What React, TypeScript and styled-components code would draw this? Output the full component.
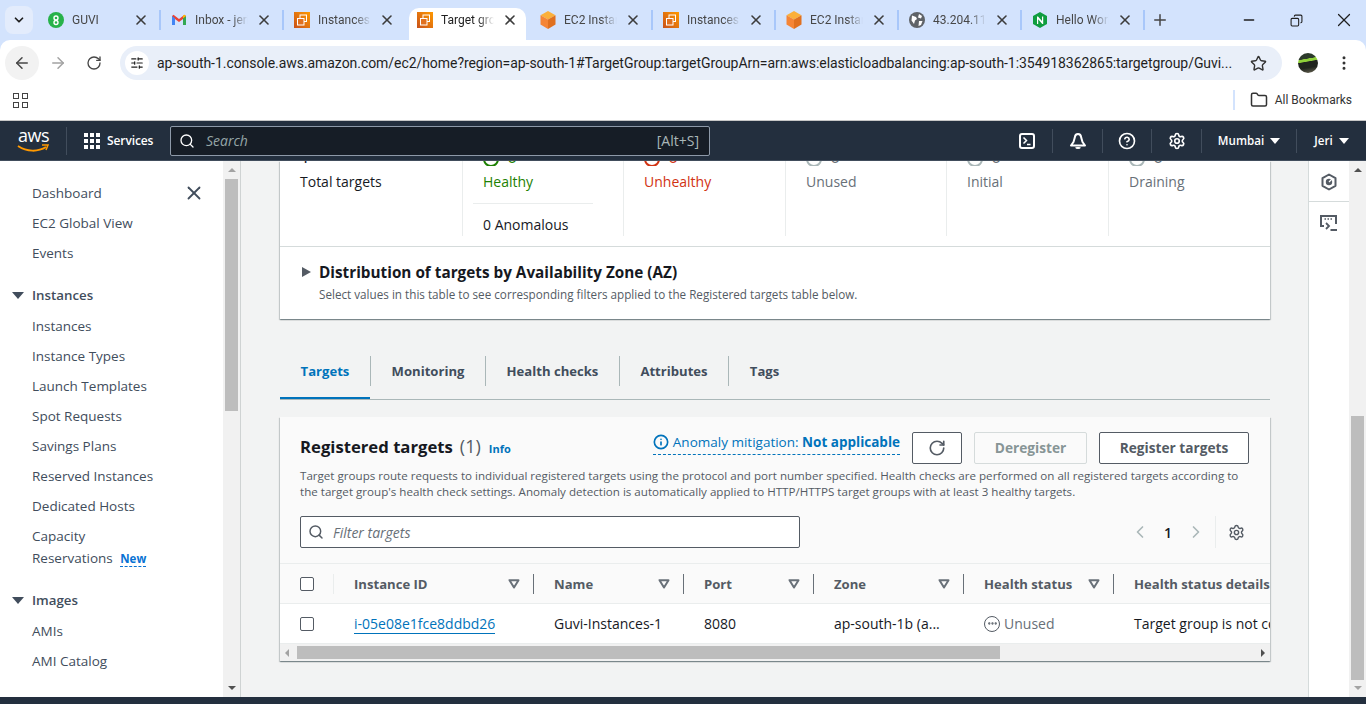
import React from "react";
import styled, { createGlobalStyle } from "styled-components";
import {
  ArrowLeft,
  ArrowRight,
  ChevronDown,
  ChevronLeft,
  ChevronRight,
  CircleHelp,
  Copy,
  Ellipsis,
  EllipsisVertical,
  Folder,
  Info,
  Minus,
  Plus,
  RotateCw,
  Search,
  Settings,
  SlidersHorizontal,
  Star,
  X,
} from "lucide-react";

const UI = `"Roboto", "Noto Sans", sans-serif`;
const EMBER = `"Open Sans", "Noto Sans", sans-serif`;

const GlobalStyle = createGlobalStyle`
  html, body { margin: 0; padding: 0; overflow: hidden; background: #fff; }
  body { font-family: ${EMBER}; color: #16191f; }
  * { box-sizing: border-box; }
`;

const Page = styled.div`
  width: 1366px;
  height: 704px;
  display: flex;
  flex-direction: column;
  overflow: hidden;
  background: #d3e3fd;
`;

/* browser chrome */
const TabStrip = styled.div`
  height: 40px;
  flex: none;
  background: #d3e3fd;
  display: flex;
  align-items: flex-end;
  padding-left: 5px;
  font-family: ${UI};
`;
const TabMenu = styled.div`
  width: 28px;
  height: 28px;
  margin: 0 4px 6px 0;
  border-radius: 8px;
  background: #e3ecfc;
  display: flex;
  align-items: center;
  justify-content: center;
  color: #1f1f1f;
`;
const Tab = styled.div<{ $active?: boolean; $sep?: boolean }>`
  width: 123px;
  height: 32px;
  flex: none;
  display: flex;
  align-items: center;
  position: relative;
  padding: 0 0 8px 11px;
  gap: 8px;
  color: ${(p) => (p.$active ? "#1f1f1f" : "#474747")};
  &::before {
    content: "";
    display: ${(p) => (p.$active ? "block" : "none")};
    position: absolute;
    left: 3px;
    right: 3px;
    top: 0;
    bottom: 0;
    background: #fff;
    border-radius: 10px 10px 0 0;
  }
  &::after {
    content: "";
    display: ${(p) => (p.$sep ? "block" : "none")};
    position: absolute;
    right: -1px;
    top: 2px;
    width: 2px;
    height: 20px;
    background: #a8c7fa;
  }
  > * {
    position: relative;
  }
`;
const TabIcon = styled.span`
  width: 16px;
  height: 16px;
  flex: none;
  display: flex;
  align-items: center;
  justify-content: center;
`;
const TabTitle = styled.span`
  width: 53px;
  flex: none;
  font-size: 12px;
  white-space: nowrap;
  overflow: hidden;
  -webkit-mask-image: linear-gradient(90deg, #000 70%, transparent);
  mask-image: linear-gradient(90deg, #000 70%, transparent);
`;
const TabClose = styled.span`
  display: flex;
  margin-left: 0;
  color: #3c3c3c;
`;
const NewTab = styled.div`
  margin: 0 0 11px 7px;
  display: flex;
  color: #444;
`;
const WindowButtons = styled.div`
  margin: 0 0 9px auto;
  display: flex;
  align-items: center;
  gap: 30px;
  padding-right: 11px;
  color: #1f1f1f;
`;
const RestoreIcon = styled.span`
  display: flex;
  margin-left: 3px;
  transform: scaleX(-1);
`;

const Toolbar = styled.div`
  height: 40px;
  flex: none;
  background: #fff;
  border-radius: 10px 10px 0 0;
  display: flex;
  align-items: center;
  padding: 6px 0 0 0;
  font-family: ${UI};
`;
const NavButton = styled.span<{ $faded?: boolean; $hover?: boolean }>`
  width: 34px;
  height: 34px;
  margin-left: ${(p) => (p.$hover ? 5 : 2)}px;
  border-radius: 50%;
  display: flex;
  align-items: center;
  justify-content: center;
  background: ${(p) => (p.$hover ? "#f2f2f2" : "transparent")};
  color: ${(p) => (p.$faded ? "#a3a3a3" : "#474747")};
`;
const Omnibox = styled.div`
  width: 1162px;
  height: 34px;
  margin-left: 9px;
  border-radius: 17px;
  background: #e9eff9;
  display: flex;
  align-items: center;
  padding: 0 15px 0 5px;
  flex: none;
`;
const SiteInfo = styled.span`
  width: 24px;
  height: 24px;
  border-radius: 50%;
  background: #fff;
  display: flex;
  align-items: center;
  justify-content: center;
  color: #1f1f1f;
  flex: none;
`;
const Url = styled.span`
  margin-left: 8px;
  flex: 1;
  font-size: 14px;
  letter-spacing: -0.056px;
  color: #1f1f1f;
  white-space: nowrap;
  overflow: hidden;
`;
const Avatar = styled.span`
  width: 20px;
  height: 20px;
  border-radius: 50%;
  margin-left: 16px;
  flex: none;
  background: linear-gradient(170deg, #2c3a2a 0 30%, #8fcf3a 32% 42%, #20241e 45% 70%, #6e6a58 100%);
`;
const MoreButton = styled.span`
  margin-left: 17px;
  display: flex;
  color: #333;
`;

const BookmarksBar = styled.div`
  height: 41px;
  flex: none;
  background: #fff;
  border-bottom: 1px solid #c7c7c7;
  display: flex;
  align-items: center;
  padding: 0 14px 0 13px;
  font-family: ${UI};
`;
const AppsGrid = styled.div`
  display: grid;
  grid-template-columns: 6px 6px;
  gap: 3px;
  span {
    width: 6px;
    height: 6px;
    border: 1.2px solid #444;
  }
`;
const BookmarksRight = styled.div`
  margin-left: auto;
  display: flex;
  align-items: center;
  font-size: 12px;
  color: #333;
  gap: 7px;
  &::before {
    content: "";
    width: 2px;
    height: 20px;
    background: #d3e3fd;
    margin-right: 8px;
  }
`;

/* aws top nav */
const TopNav = styled.header`
  height: 40px;
  flex: none;
  background: #232f3e;
  display: flex;
  align-items: center;
  color: #fff;
  border-bottom: 1px solid #414d5c;
`;
const AwsLogo = styled.div`
  width: 67px;
  flex: none;
  height: 28px;
  padding-left: 18px;
  position: relative;
  font-size: 18px;
  line-height: 17px;
  letter-spacing: -0.5px;
  border-right: 1px solid #414d5c;
  svg {
    position: absolute;
    left: 17px;
    top: 17px;
  }
`;
const ServicesButton = styled.div`
  display: flex;
  align-items: center;
  gap: 7px;
  margin-left: 17px;
  font-size: 12px;
  font-weight: 600;
  letter-spacing: -0.1px;
  width: 86px;
  flex: none;
`;
const Dots = styled.div`
  display: grid;
  grid-template-columns: repeat(3, 4px);
  gap: 2px;
  span {
    width: 4px;
    height: 4px;
    background: #fff;
  }
`;
const NavSearch = styled.div`
  width: 540px;
  height: 30px;
  flex: none;
  background: #161d26;
  border: 1px solid #8d99a8;
  border-radius: 2px;
  display: flex;
  align-items: center;
  padding: 0 10px 0 8px;
  gap: 11px;
  color: #d5dbdb;
  font-size: 14px;
`;
const SearchHint = styled.span`
  font-style: italic;
  color: #95a5a6;
`;
const Shortcut = styled.span`
  margin-left: auto;
  color: #aab7b8;
`;
const NavActions = styled.div`
  margin-left: auto;
  display: flex;
  align-items: center;
  height: 100%;
`;
const NavAction = styled.div<{ $w: number }>`
  width: ${(p) => p.$w}px;
  height: 24px;
  display: flex;
  align-items: center;
  justify-content: center;
  gap: 6px;
  border-left: 1px solid #414d5c;
  font-size: 11.6px;
  font-weight: 600;
  &:first-child {
    border-left: 0;
  }
`;
const Caret = styled.span<{ $c?: string; $size?: number }>`
  display: inline-block;
  width: 0;
  height: 0;
  border-left: ${(p) => p.$size ?? 5}px solid transparent;
  border-right: ${(p) => p.$size ?? 5}px solid transparent;
  border-top: ${(p) => (p.$size ?? 5) + 1}px solid ${(p) => p.$c ?? "#fff"};
`;

/* console body */
const Body = styled.div`
  flex: 1;
  min-height: 0;
  display: flex;
  background: #f2f3f3;
`;
const SideNav = styled.nav`
  width: 223px;
  flex: none;
  background: #fff;
  padding: 22px 0 0 0;
  position: relative;
  color: #414d5c;
  font-size: 13.5px;
`;
const NavClose = styled.span`
  position: absolute;
  left: 183px;
  top: 21px;
  display: flex;
  color: #414d5c;
`;
const NavLink = styled.div<{ $gap?: number }>`
  height: 30px;
  line-height: 20px;
  padding: 0 0 0 32px;
  margin-bottom: ${(p) => p.$gap ?? 0}px;
  white-space: nowrap;
`;
const NavLinkTall = styled.div`
  padding: 0 0 0 32px;
  line-height: 22px;
  margin: -1px 0 20px 0;
`;
const NewBadge = styled.span`
  font-size: 11.5px;
  font-weight: 700;
  color: #0972d3;
  margin-left: 4px;
  border-bottom: 1px dashed #0972d3;
`;
const NavSection = styled.div`
  height: 30px;
  line-height: 20px;
  font-size: 13.3px;
  font-weight: 600;
  display: flex;
  align-items: center;
  gap: 8px;
  padding: 0 0 10px 12px;
  margin-bottom: 1px;
`;
const Track = styled.div`
  width: 18px;
  flex: none;
  background: #f1f1f1;
  display: flex;
  flex-direction: column;
  align-items: center;
  position: relative;
  border-right: 1px solid #cfd3d3;
`;
const Thumb = styled.div<{ $top: number; $h: number }>`
  position: absolute;
  left: 2px;
  top: ${(p) => p.$top}px;
  width: 13px;
  height: ${(p) => p.$h}px;
  background: #bdbdbd;
`;
const ArrowUp = styled.span<{ $c: string }>`
  margin-top: 7px;
  width: 0;
  height: 0;
  border-left: 4px solid transparent;
  border-right: 4px solid transparent;
  border-bottom: 4px solid ${(p) => p.$c};
`;
const ArrowDown = styled.span<{ $c: string }>`
  margin-top: auto;
  margin-bottom: 7px;
  width: 0;
  height: 0;
  border-left: 4px solid transparent;
  border-right: 4px solid transparent;
  border-top: 4px solid ${(p) => p.$c};
`;

const Main = styled.main`
  flex: 1;
  min-width: 0;
  overflow: hidden;
  padding: 0 38px 0 39px;
`;
const Card = styled.section`
  background: #fff;
  box-shadow: 0 1px 1px 0 rgba(0, 28, 36, 0.3), 1px 1px 1px 0 rgba(0, 28, 36, 0.15),
    -1px 1px 1px 0 rgba(0, 28, 36, 0.15);
`;
const Stats = styled.div`
  height: 86px;
  display: grid;
  grid-template-columns: 182px 161px 162px 161px 162px 1fr;
  border-bottom: 1px solid #d5dbdb;
  padding-bottom: 10px;
`;
const Stat = styled.div<{ $first?: boolean }>`
  border-left: ${(p) => (p.$first ? "0" : "1px solid #eaeded")};
  padding-left: 20px;
`;
const StatClip = styled.div`
  height: 5px;
  overflow: hidden;
  position: relative;
  margin-bottom: 6px;
`;
const StatRing = styled.span<{ $c: string }>`
  position: absolute;
  left: 0;
  top: -10px;
  width: 16px;
  height: 16px;
  border: 2px solid ${(p) => p.$c};
  border-radius: 50%;
`;
const StatDigit = styled.span<{ $c: string; $x: number }>`
  position: absolute;
  left: ${(p) => p.$x}px;
  top: -16px;
  font-size: 18px;
  line-height: 22px;
  color: ${(p) => p.$c};
`;
const StatLabel = styled.div<{ $c: string }>`
  font-size: 14px;
  line-height: 20px;
  color: ${(p) => p.$c};
`;
const StatRule = styled.div`
  height: 1px;
  width: 120px;
  margin: 11px 0 11px -10px;
  background: #eaeded;
`;
const Distribution = styled.div`
  height: 72px;
  display: flex;
  gap: 8px;
  padding: 15px 0 0 22px;
`;
const DistCaret = styled.span`
  margin-top: 5px;
  width: 0;
  height: 0;
  border-top: 5px solid transparent;
  border-bottom: 5px solid transparent;
  border-left: 9px solid #545b64;
`;
const DistTitle = styled.div`
  font-size: 15.3px;
  font-weight: 700;
  line-height: 20px;
`;
const DistDesc = styled.div`
  font-size: 11.7px;
  line-height: 16px;
  color: #545b64;
  margin-top: 4px;
`;

const TabsRow = styled.div`
  margin-top: 36px;
  height: 45px;
  display: flex;
  align-items: flex-start;
  border-bottom: 1px solid #aab7b8;
`;
const ConsoleTab = styled.div<{ $active?: boolean; $w: number }>`
  width: ${(p) => p.$w}px;
  height: 30px;
  margin-top: 1px;
  display: flex;
  align-items: center;
  justify-content: center;
  font-size: 13.1px;
  font-weight: 700;
  line-height: 20px;
  color: ${(p) => (p.$active ? "#0073bb" : "#414d5c")};
  position: relative;
  border-left: ${(p) => (p.$active ? "0" : "1px solid #aab7b8")};
  &::after {
    content: "";
    display: ${(p) => (p.$active ? "block" : "none")};
    position: absolute;
    left: 0;
    right: 0;
    bottom: -13px;
    height: 2px;
    background: #0073bb;
  }
`;

const TargetsCard = styled(Card)`
  margin-top: 17px;
  background: #fafafa;
`;
const CardHead = styled.div`
  padding: 15px 21px 0 20px;
`;
const HeadRow = styled.div`
  display: flex;
  align-items: flex-start;
  height: 32px;
`;
const CardTitle = styled.h2`
  margin: 3px 0 0 0;
  font-size: 16.7px;
  font-weight: 700;
  line-height: 22px;
  span {
    font-size: 18px;
    font-weight: 400;
    color: #545b64;
    margin-left: 7px;
  }
`;
const InfoLink = styled.a`
  margin: 10px 0 0 8px;
  font-size: 11px;
  font-weight: 700;
  line-height: 14px;
  color: #0073bb;
`;
const Anomaly = styled.div`
  margin-left: auto;
  display: flex;
  align-items: center;
  gap: 4px;
  height: 23px;
  padding-bottom: 2px;
  font-size: 13.5px;
  color: #0073bb;
  border-bottom: 1px dashed #0073bb;
  b {
    font-weight: 700;
  }
`;
const Button = styled.div<{ $w: number; $disabled?: boolean }>`
  width: ${(p) => p.$w}px;
  height: 32px;
  margin-left: 12px;
  padding-bottom: 1px;
  border: 1px solid ${(p) => (p.$disabled ? "#d5dbdb" : "#545b64")};
  border-radius: 2px;
  display: flex;
  align-items: center;
  justify-content: center;
  font-size: 13.7px;
  font-weight: 700;
  color: ${(p) => (p.$disabled ? "#879596" : "#545b64")};
  background: ${(p) => (p.$disabled ? "#fafafa" : "#fff")};
`;
const CardDesc = styled.p`
  margin: 4px 0 0 0;
  font-size: 11.6px;
  line-height: 16px;
  color: #545b64;
`;
const FilterRow = styled.div`
  margin-top: 16px;
  height: 32px;
  display: flex;
  align-items: center;
`;
const FilterInput = styled.div`
  width: 500px;
  height: 32px;
  background: #fff;
  border: 1px solid #545b64;
  border-radius: 2px;
  display: flex;
  align-items: center;
  padding: 0 0 0 7px;
  gap: 9px;
  font-size: 14px;
  font-style: italic;
  color: #687078;
`;
const Pager = styled.div`
  margin-left: auto;
  display: flex;
  align-items: center;
  color: #aab7b8;
  margin-right: 4px;
`;
const PageNum = styled.span`
  margin: 0 14px;
  font-size: 14px;
  font-weight: 600;
  color: #16191f;
`;
const PagerGear = styled.span`
  display: flex;
  margin-left: 9px;
  padding-left: 12px;
  height: 32px;
  align-items: center;
  border-left: 1px solid #eaeded;
  color: #545b64;
`;

const TableWrap = styled.div`
  margin-top: 15px;
  overflow: hidden;
`;
const Table = styled.table`
  width: 1050px;
  table-layout: fixed;
  border-collapse: collapse;
  font-size: 14px;
`;
const Th = styled.th<{ $w: number }>`
  width: ${(p) => p.$w}px;
  height: 40px;
  background: #fafafa;
  border-top: 1px solid #eaeded;
  border-bottom: 1px solid #eaeded;
  padding: 0;
  text-align: left;
  font-size: 13.1px;
  font-weight: 700;
  color: #545b64;
  white-space: nowrap;
`;
const ThInner = styled.div<{ $faint?: boolean }>`
  display: flex;
  align-items: center;
  height: 20px;
  padding: 0 13px 0 20px;
  border-right: 1px solid ${(p) => (p.$faint ? "#eaeded" : "#687078")};
  justify-content: space-between;
`;
const ThLast = styled.div`
  padding-left: 20px;
`;
const SortCaret = styled.span`
  display: block;
  width: 12px;
  height: 10px;
  svg {
    display: block;
  }
`;
const Td = styled.td`
  height: 40px;
  padding: 0 0 0 20px;
  background: #fff;
  border-bottom: 1px solid #eaeded;
  white-space: nowrap;
  overflow: hidden;
`;
const Box = styled.span`
  display: block;
  width: 14px;
  height: 14px;
  border: 1px solid #545b64;
  border-radius: 2px;
  background: #fff;
`;
const IdLink = styled.a`
  color: #0073bb;
  border-bottom: 1px solid #0073bb;
`;
const StatusCell = styled.span`
  display: flex;
  align-items: center;
  gap: 4px;
  color: #687078;
`;
const StatusDot = styled.span`
  width: 16px;
  height: 16px;
  border: 1.6px solid #545b64;
  border-radius: 50%;
  display: flex;
  align-items: center;
  justify-content: center;
  color: #545b64;
`;
const HScroll = styled.div`
  height: 17px;
  background: #f1f1f1;
  display: flex;
  align-items: center;
  position: relative;
  padding: 0 5px;
  justify-content: space-between;
`;
const HThumb = styled.div`
  position: absolute;
  left: 17px;
  top: 2px;
  width: 703px;
  height: 13px;
  background: #bdbdbd;
`;
const ArrowL = styled.span`
  width: 0;
  height: 0;
  border-top: 4px solid transparent;
  border-bottom: 4px solid transparent;
  border-right: 4px solid #a3a3a3;
`;
const ArrowR = styled.span`
  width: 0;
  height: 0;
  border-top: 4px solid transparent;
  border-bottom: 4px solid transparent;
  border-left: 4px solid #505050;
`;

const Rail = styled.aside`
  width: 41px;
  flex: none;
  background: #fff;
  border-left: 1px solid #d5dbdb;
  color: #545b64;
`;
const RailItem = styled.div<{ $line?: boolean }>`
  height: 41px;
  display: flex;
  align-items: center;
  justify-content: center;
  padding-top: ${(p) => (p.$line ? 2 : 0)}px;
  border-bottom: ${(p) => (p.$line ? "1px solid #d5dbdb" : "0")};
`;
const PageScroll = styled(Track)`
  width: 17px;
  border-right: 0;
`;
const BottomBar = styled.div`
  height: 7px;
  flex: none;
  background: #232f3e;
`;

const AwsTabIcon = () => (
  <svg width="16" height="16" viewBox="0 0 16 16">
    <defs>
      <linearGradient id="ec2g" x1="0" y1="1" x2="1" y2="0">
        <stop offset="0" stopColor="#c8511b" />
        <stop offset="1" stopColor="#f90" />
      </linearGradient>
    </defs>
    <rect width="16" height="16" fill="url(#ec2g)" />
    <rect x="6" y="3" width="6.5" height="6.5" fill="none" stroke="#fff" strokeWidth="1" />
    <rect x="3.5" y="6.5" width="6.5" height="6.5" fill="#e0701f" stroke="#fff" strokeWidth="1" />
  </svg>
);
const CubeIcon = () => (
  <svg width="16" height="18" viewBox="0 0 16 18">
    <path d="M8 0 15.500 4.200 8 8.400.5 4.200Z" fill="#fbb03b" />
    <path d="M.5 4.200 8 8.400V18L.5 13.600Z" fill="#f58536" />
    <path d="M15.500 4.200 8 8.400V18l7.500-4.400Z" fill="#e0701f" />
  </svg>
);
const GuviIcon = () => (
  <svg width="16" height="16" viewBox="0 0 16 16">
    <circle cx="8" cy="8" r="8" fill="#27b24a" />
    <circle cx="8" cy="6" r="2" fill="none" stroke="#fff" strokeWidth="1.4" />
    <circle cx="8" cy="10.500" r="2" fill="none" stroke="#fff" strokeWidth="1.4" />
  </svg>
);
const GmailIcon = () => (
  <svg width="16" height="16" viewBox="0 0 16 16">
    <path d="M1 4v9h3V7l4 3 4-3v6h3V4l-1.500-1.200L8 7 2.500 2.800Z" fill="#ea4335" />
    <path d="M1 4v9h3V6.300Z" fill="#4285f4" />
    <path d="M15 4v9h-3V6.300Z" fill="#34a853" />
    <path d="M15 4l-3 2.300V3.500l1.500-.7Z" fill="#fbbc04" />
  </svg>
);
const GlobeIcon = () => (
  <svg width="16" height="16" viewBox="0 0 16 16">
    <circle cx="8" cy="8" r="8" fill="#5f6368" />
    <path d="M3 3.500 7 5l1 2-2 1.500L5 12 2.500 8.500ZM10 2l3 2-1 2.500-3-1ZM10 9l3.500 0-1.500 4-2.500 1Z" fill="#fff" />
  </svg>
);
const NginxIcon = () => (
  <svg width="16" height="16" viewBox="0 0 16 16">
    <path d="M8 0 15 4v8l-7 4-7-4V4Z" fill="#0f9d3f" />
    <path d="M5 12V4.500h1L10 9V4.500h1.200V12h-1L6.200 7.300V12Z" fill="#fff" />
  </svg>
);
const SortIcon = () => (
  <SortCaret>
    <svg width="12" height="10" viewBox="0 0 12 10">
      <path d="M1.500 1.200h9L6 8.500Z" fill="none" stroke="#687078" strokeWidth="2" strokeLinejoin="round" />
    </svg>
  </SortCaret>
);
const BellIcon = () => (
  <svg width="18" height="18" viewBox="0 0 18 18">
    <path d="M9 2c-2 0-3 1.500-3.200 3.500L4.500 10 2 13.500h14L13.500 10l-1.300-4.500C12 3.500 11 2 9 2Z" fill="none" stroke="#fff" strokeWidth="2" strokeLinejoin="round" />
    <path d="M7 15.200c.4 1.200 3.600 1.200 4 0" fill="none" stroke="#fff" strokeWidth="2" />
  </svg>
);
const TerminalIcon = () => (
  <svg width="16" height="16" viewBox="0 0 16 16">
    <rect x="1" y="1" width="14" height="14" rx="2" fill="none" stroke="#fff" strokeWidth="2" />
    <path d="M4.500 4.500 7.500 7.500 4.500 10.500M8 11.500h3.500" fill="none" stroke="#fff" strokeWidth="1.500" />
  </svg>
);
const HexIcon = () => (
  <svg width="18" height="18" viewBox="0 0 18 18">
    <path d="M9 1.500 15.500 5.200V12.800L9 16.500 2.500 12.800V5.200Z" fill="none" stroke="#545b64" strokeWidth="2" strokeLinejoin="round" />
    <path d="M5.800 9a3.200 3.200 0 1 1 6.400 0 3.200 3.200 0 0 1-6.400 0Z" fill="#545b64" />
    <path d="M9 9l3-3" stroke="#fff" strokeWidth="1.200" />
  </svg>
);
const ShellIcon = () => (
  <svg width="20" height="20" viewBox="0 0 20 20">
    <path d="M5 13H2V3h15v8" fill="none" stroke="#545b64" strokeWidth="2" />
    <path d="M5.500 6h1.500M8.500 6h1.500M11.500 6h1.500" stroke="#545b64" strokeWidth="1.500" />
    <path d="M7 10l3 3-3 3M11.500 17H18" fill="none" stroke="#545b64" strokeWidth="1.800" />
  </svg>
);

const tabs = [
  { title: "GUVI", icon: <GuviIcon />, sep: true },
  { title: "Inbox - jeri", icon: <GmailIcon />, sep: true },
  { title: "Instances", icon: <AwsTabIcon />, sep: false },
  { title: "Target groups", icon: <AwsTabIcon />, active: true },
  { title: "EC2 Instances", icon: <CubeIcon />, sep: true },
  { title: "Instances", icon: <AwsTabIcon />, sep: true },
  { title: "EC2 Instances", icon: <CubeIcon />, sep: true },
  { title: "43.204.110", icon: <GlobeIcon />, sep: true },
  { title: "Hello World", icon: <NginxIcon />, sep: true },
];
const ec2Links = [
  "Instances",
  "Instance Types",
  "Launch Templates",
  "Spot Requests",
  "Savings Plans",
  "Reserved Instances",
  "Dedicated Hosts",
];
const stats = [
  { label: "Healthy", ring: "#1d8102", color: "#1d8102" },
  { label: "Unhealthy", ring: "#d13212", color: "#d13212" },
  { label: "Unused", ring: "#aab7b8", color: "#687078" },
  { label: "Initial", ring: "#aab7b8", color: "#687078" },
  { label: "Draining", ring: "#aab7b8", color: "#687078" },
];
const consoleTabs = [
  { label: "Monitoring", w: 115 },
  { label: "Health checks", w: 134 },
  { label: "Attributes", w: 109 },
  { label: "Tags", w: 72 },
];
const columns = [
  { label: "Instance ID", w: 200 },
  { label: "Name", w: 150 },
  { label: "Port", w: 130 },
  { label: "Zone", w: 150 },
  { label: "Health status", w: 150 },
];

export default function App() {
  return (
    <Page>
      <GlobalStyle />
      <TabStrip>
        <TabMenu>
          <ChevronDown size={14} strokeWidth={3} />
        </TabMenu>
        {tabs.map((t, i) => (
          <Tab key={i} $active={t.active} $sep={t.sep}>
            <TabIcon>{t.icon}</TabIcon>
            <TabTitle>{t.title}</TabTitle>
            <TabClose>
              <X size={16} strokeWidth={2.4} />
            </TabClose>
          </Tab>
        ))}
        <NewTab>
          <Plus size={18} />
        </NewTab>
        <WindowButtons>
          <Minus size={16} />
          <RestoreIcon>
            <Copy size={13} />
          </RestoreIcon>
          <X size={22} strokeWidth={1.3} />
        </WindowButtons>
      </TabStrip>

      <Toolbar>
        <NavButton $hover>
          <ArrowLeft size={18} />
        </NavButton>
        <NavButton $faded>
          <ArrowRight size={18} />
        </NavButton>
        <NavButton>
          <RotateCw size={16} />
        </NavButton>
        <Omnibox>
          <SiteInfo>
            <SlidersHorizontal size={14} />
          </SiteInfo>
          <Url>
            ap-south-1.console.aws.amazon.com/ec2/home?region=ap-south-1#TargetGroup:targetGroupArn=arn:aws:elasticloadbalancing:ap-south-1:354918362865:targetgroup/Guvi...
          </Url>
          <Star size={17} color="#333" />
        </Omnibox>
        <Avatar />
        <MoreButton>
          <EllipsisVertical size={18} />
        </MoreButton>
      </Toolbar>

      <BookmarksBar>
        <AppsGrid>
          <span />
          <span />
          <span />
          <span />
        </AppsGrid>
        <BookmarksRight>
          <Folder size={18} />
          All Bookmarks
        </BookmarksRight>
      </BookmarksBar>

      <TopNav>
        <AwsLogo>
          aws
          <svg width="34" height="10" viewBox="0 0 34 10">
            <path d="M1 2c9 6 20 6 28 1" fill="none" stroke="#f90" strokeWidth="2" />
            <path d="M25 1l6 0-2 5" fill="none" stroke="#f90" strokeWidth="1.500" />
          </svg>
        </AwsLogo>
        <ServicesButton>
          <Dots>
            {Array.from({ length: 9 }).map((_, i) => (
              <span key={i} />
            ))}
          </Dots>
          Services
        </ServicesButton>
        <NavSearch>
          <Search size={16} color="#fff" />
          <SearchHint>Search</SearchHint>
          <Shortcut>[Alt+S]</Shortcut>
        </NavSearch>
        <NavActions>
          <NavAction $w={50}>
            <TerminalIcon />
          </NavAction>
          <NavAction $w={50}>
            <BellIcon />
          </NavAction>
          <NavAction $w={49}>
            <CircleHelp size={18} strokeWidth={2.2} />
          </NavAction>
          <NavAction $w={50}>
            <Settings size={18} strokeWidth={2.2} />
          </NavAction>
          <NavAction $w={95}>
            Mumbai <Caret />
          </NavAction>
          <NavAction $w={70}>
            Jeri <Caret />
          </NavAction>
        </NavActions>
      </TopNav>

      <Body>
        <SideNav>
          <NavClose>
            <X size={22} strokeWidth={2} />
          </NavClose>
          <NavLink>Dashboard</NavLink>
          <NavLink>EC2 Global View</NavLink>
          <NavLink $gap={12}>Events</NavLink>
          <NavSection>
            <Caret $c="#414d5c" $size={6} />
            Instances
          </NavSection>
          {ec2Links.map((l) => (
            <NavLink key={l}>{l}</NavLink>
          ))}
          <NavLinkTall>
            Capacity
            <br />
            Reservations <NewBadge>New</NewBadge>
          </NavLinkTall>
          <NavSection>
            <Caret $c="#414d5c" $size={6} />
            Images
          </NavSection>
          <NavLink>AMIs</NavLink>
          <NavLink>AMI Catalog</NavLink>
        </SideNav>
        <Track>
          <ArrowUp $c="#a3a3a3" />
          <Thumb $top={18} $h={232} />
          <ArrowDown $c="#505050" />
        </Track>

        <Main>
          <Card>
            <Stats>
              <Stat $first>
                <StatClip>
                  <StatDigit $c="#16191f" $x={0}>
                    1
                  </StatDigit>
                </StatClip>
                <StatLabel $c="#16191f">Total targets</StatLabel>
              </Stat>
              {stats.map((s, i) => (
                <Stat key={s.label}>
                  <StatClip>
                    <StatRing $c={s.ring} />
                    <StatDigit $c={s.color} $x={24}>
                      0
                    </StatDigit>
                  </StatClip>
                  <StatLabel $c={s.color}>{s.label}</StatLabel>
                  {i === 0 && (
                    <>
                      <StatRule />
                      <StatLabel $c="#16191f">0 Anomalous</StatLabel>
                    </>
                  )}
                </Stat>
              ))}
            </Stats>
            <Distribution>
              <DistCaret />
              <div>
                <DistTitle>Distribution of targets by Availability Zone (AZ)</DistTitle>
                <DistDesc>
                  Select values in this table to see corresponding filters applied to the Registered targets table below.
                </DistDesc>
              </div>
            </Distribution>
          </Card>

          <TabsRow>
            <ConsoleTab $active $w={90}>
              Targets
            </ConsoleTab>
            {consoleTabs.map((t) => (
              <ConsoleTab key={t.label} $w={t.w}>
                {t.label}
              </ConsoleTab>
            ))}
          </TabsRow>

          <TargetsCard>
            <CardHead>
              <HeadRow>
                <CardTitle>
                  Registered targets<span>(1)</span>
                </CardTitle>
                <InfoLink>Info</InfoLink>
                <Anomaly>
                  <Info size={16} strokeWidth={2.5} />
                  <span>
                    Anomaly mitigation: <b>Not applicable</b>
                  </span>
                </Anomaly>
                <Button $w={50}>
                  <RotateCw size={18} strokeWidth={2.2} />
                </Button>
                <Button $w={113} $disabled>
                  Deregister
                </Button>
                <Button $w={150}>Register targets</Button>
              </HeadRow>
              <CardDesc>
                Target groups route requests to individual registered targets using the protocol and port number specified. Health checks are performed on all registered targets according to the target group's health check settings. Anomaly detection is automatically applied to HTTP/HTTPS target groups with at least 3 healthy targets.
              </CardDesc>
              <FilterRow>
                <FilterInput>
                  <Search size={16} color="#545b64" strokeWidth={2.2} />
                  Filter targets
                </FilterInput>
                <Pager>
                  <ChevronLeft size={20} />
                  <PageNum>1</PageNum>
                  <ChevronRight size={20} />
                  <PagerGear>
                    <Settings size={17} strokeWidth={2} />
                  </PagerGear>
                </Pager>
              </FilterRow>
            </CardHead>
            <TableWrap>
              <Table>
                <thead>
                  <tr>
                    <Th $w={54}>
                      <ThInner $faint>
                        <Box />
                      </ThInner>
                    </Th>
                    {columns.map((c) => (
                      <Th key={c.label} $w={c.w}>
                        <ThInner>
                          {c.label}
                          <SortIcon />
                        </ThInner>
                      </Th>
                    ))}
                    <Th $w={216}>
                      <ThLast>Health status details</ThLast>
                    </Th>
                  </tr>
                </thead>
                <tbody>
                  <tr>
                    <Td>
                      <Box />
                    </Td>
                    <Td>
                      <IdLink>i-05e08e1fce8ddbd26</IdLink>
                    </Td>
                    <Td>Guvi-Instances-1</Td>
                    <Td>8080</Td>
                    <Td>ap-south-1b (a...</Td>
                    <Td>
                      <StatusCell>
                        <StatusDot>
                          <Ellipsis size={11} strokeWidth={3} />
                        </StatusDot>
                        Unused
                      </StatusCell>
                    </Td>
                    <Td>Target group is not configured</Td>
                  </tr>
                </tbody>
              </Table>
            </TableWrap>
            <HScroll>
              <ArrowL />
              <HThumb />
              <ArrowR />
            </HScroll>
          </TargetsCard>
        </Main>

        <Rail>
          <RailItem $line>
            <HexIcon />
          </RailItem>
          <RailItem>
            <ShellIcon />
          </RailItem>
        </Rail>
        <PageScroll>
          <ArrowUp $c="#505050" />
          <Thumb $top={255} $h={264} />
          <ArrowDown $c="#a3a3a3" />
        </PageScroll>
      </Body>
      <BottomBar />
    </Page>
  );
}
